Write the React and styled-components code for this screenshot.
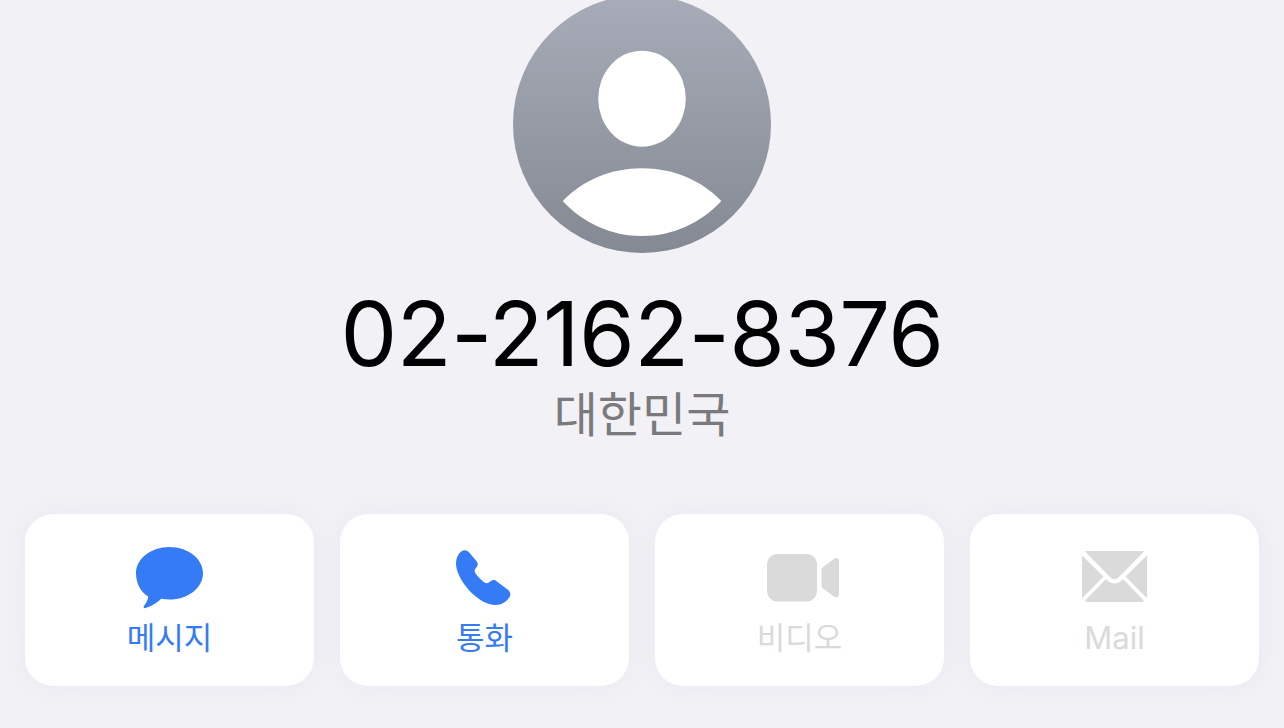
import styled, { createGlobalStyle } from 'styled-components';

const GlobalStyle = createGlobalStyle`
  html, body {
    margin: 0;
    height: 100%;
    background: #f1f1f6;
    overflow: hidden;
  }
`;

const BLUE = '#357bf6';
const MUTED = '#dadada';

const Page = styled.div`
  width: 1284px;
  height: 728px;
  overflow: hidden;
  display: flex;
  flex-direction: column;
  align-items: center;
  font-family: Inter, 'Noto Sans CJK KR', sans-serif;
`;

const Avatar = styled.svg`
  display: block;
  width: 258px;
  height: 258px;
  margin-top: -5px;
  flex: none;
`;

const Number = styled.h1`
  margin: 26px 0 0;
  font-size: 90px;
  line-height: 110px;
  font-weight: 400;
  letter-spacing: -0.6px;
  color: #000;
`;

const Country = styled.div`
  margin-top: -4px;
  font-size: 48px;
  line-height: 60px;
  color: #7a7a7c;
`;

const Actions = styled.div`
  align-self: stretch;
  display: grid;
  grid-template-columns: repeat(4, 289px);
  gap: 26px;
  padding: 0 25px;
  margin-top: 69px;
`;

const ActionCard = styled.div`
  height: 172px;
  border-radius: 28px;
  background: #fff;
  box-shadow: 0 0 32px rgba(40, 40, 70, 0.04);
  display: flex;
  flex-direction: column;
  align-items: center;
  color: ${({ $off }) => ($off ? MUTED : BLUE)};
`;

const IconSlot = styled.div`
  height: 64px;
  margin-top: 32px;
  display: flex;
  align-items: center;
  justify-content: center;
`;

const Label = styled.span`
  margin-top: 8px;
  font-size: 31px;
  line-height: 40px;
`;

const MessageIcon = () => (
  <svg width="67" height="62" viewBox="0 0 67 62" fill="currentColor">
    <path d="M33.5 0C52 0 67 11.8 67 26.3 67 41 52 52.6 33.5 52.6c-3 0-5.700-.3-8.400-.8-4.500 4.700-11.500 8.300-15.800 9.300-1.400.3-2.300-1-1.300-2.200 1.700-2 3.700-5 4.300-9.300C4.800 45.300 0 36.300 0 26.300 0 11.800 15 0 33.500 0Z" />
  </svg>
);

const PhoneIcon = () => (
  <svg width="57" height="57" viewBox="0 0 57 57" fill="currentColor">
    <path d="M5.500 1.200C8.500-.6 11 0 13 2.300l7.200 8.500c1.800 2.200 2 4 .7 6-1 1.500-2.300 2.700-2.300 4 0 1.700 1.800 4.200 5 7.400 3 3 5.600 5 7.300 5 1.300 0 2.500-1.200 4-2.200 2-1.300 3.800-1.200 6 .6l11.300 8.500c2.500 2 2.800 4.800 1 7.400-2.800 4.300-7.500 7.500-13.500 7.500-8.700 0-17.800-5.500-26.500-14.500C5.500 31.500 0 21.700 0 13.500 0 8.300 2 4 5.500 1.200Z" />
  </svg>
);

const VideoIcon = () => (
  <svg width="78" height="49" viewBox="-6 0 78 49" fill="currentColor">
    <rect x="0" y="0" width="50" height="47.500" rx="10" />
    <path d="M54.500 16.500c0-1.500.5-2.600 1.600-3.500l11-8.200c2.200-1.500 4.900-.5 4.900 2.300v33.300c0 2.800-2.700 3.800-4.900 2.300l-11-8.200c-1.100-.9-1.600-2-1.600-3.500Z" />
  </svg>
);

const MailIcon = () => (
  <svg width="65" height="55" viewBox="0 0 65 55" fill="currentColor">
    <path d="M5 0H60c1 0 1.600.2 2 .5L37 26c-3 3-6 3-9 0L3 .5C3.400.2 4 0 5 0Z" />
    <path d="M0 4.500 21.500 25.500 .3 47C.1 46.500 0 46 0 45V6C0 5.500 0 5 0 4.500Z" />
    <path d="M65 4.500 43.500 25.500 64.700 47c.2-.5.3-1 .3-2V6c0-.5 0-1 0-1.500Z" />
    <path d="M24 28l1.500 1.500c4 4 10 4 14 0L41 28 62 49.800C61 50.600 60.500 51 59 51H6C4.500 51 4 50.600 3 49.800Z" />
  </svg>
);

const actions = [
  { label: '메시지', Icon: MessageIcon },
  { label: '통화', Icon: PhoneIcon },
  { label: '비디오', Icon: VideoIcon, off: true },
  { label: 'Mail', Icon: MailIcon, off: true },
];

export default function App() {
  return (
    <Page>
      <GlobalStyle />
      <Avatar viewBox="0 0 258 258">
        <defs>
          <linearGradient id="avatarFill" x1="0" y1="0" x2="0" y2="1">
            <stop offset="0" stopColor="#a8acb8" />
            <stop offset="1" stopColor="#858993" />
          </linearGradient>
        </defs>
        <circle cx="129" cy="129" r="129" fill="url(#avatarFill)" />
        <ellipse cx="129" cy="103.700" rx="43.800" ry="48" fill="#fff" />
        <path d="M49.700 206C70 185 98 173.300 129 173.300S188 185 208.300 206C188 228 160 241 129 241S70 228 49.700 206Z" fill="#fff" />
      </Avatar>
      <Number>02-2162-8376</Number>
      <Country>대한민국</Country>
      <Actions>
        {actions.map(({ label, Icon, off }) => (
          <ActionCard key={label} $off={off}>
            <IconSlot>
              <Icon />
            </IconSlot>
            <Label>{label}</Label>
          </ActionCard>
        ))}
      </Actions>
    </Page>
  );
}
